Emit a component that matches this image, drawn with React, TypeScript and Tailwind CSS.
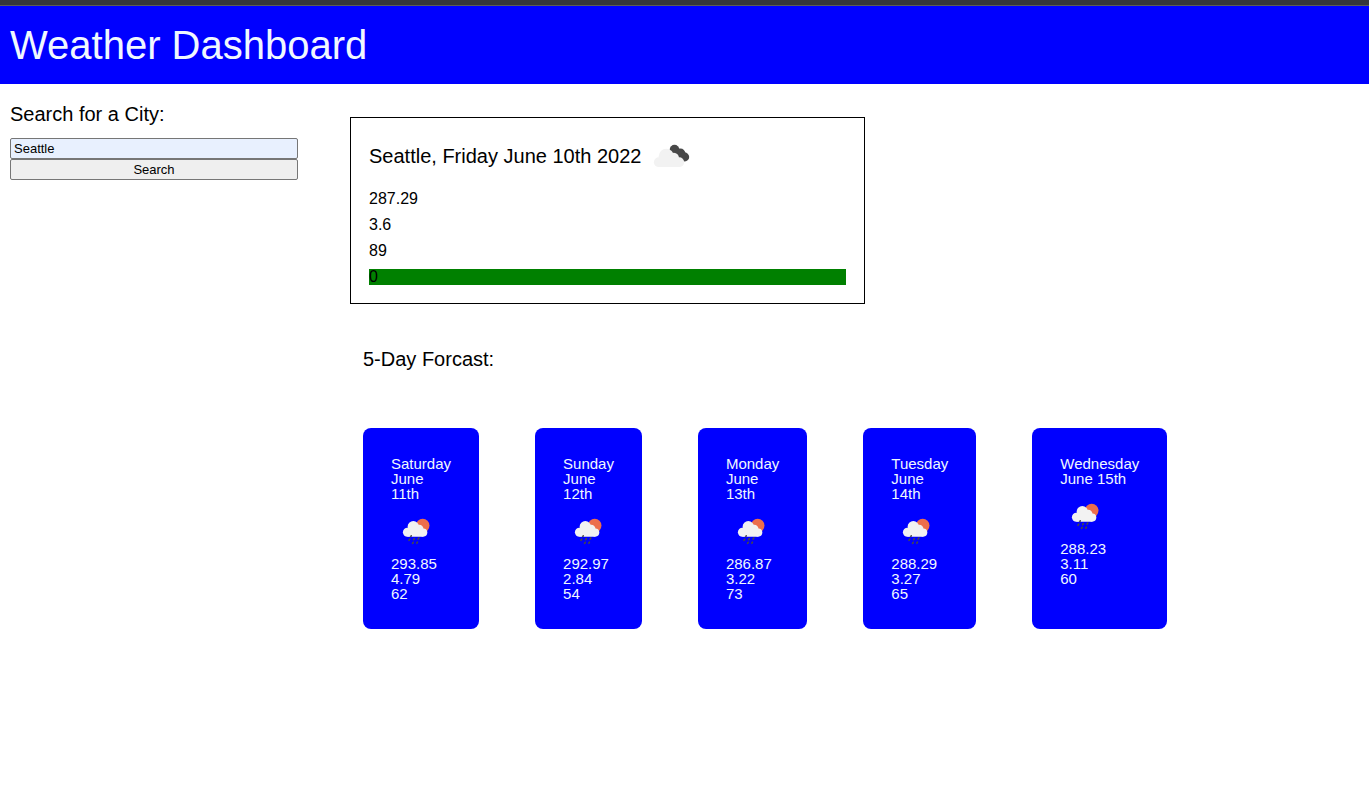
import { useState } from "react";

type Day = {
  weekday: string;
  date: string;
  temp: string;
  wind: string;
  humidity: string;
};

const days: Day[] = [
  { weekday: "Saturday", date: "June 11th", temp: "293.85", wind: "4.79", humidity: "62" },
  { weekday: "Sunday", date: "June 12th", temp: "292.97", wind: "2.84", humidity: "54" },
  { weekday: "Monday", date: "June 13th", temp: "286.87", wind: "3.22", humidity: "73" },
  { weekday: "Tuesday", date: "June 14th", temp: "288.29", wind: "3.27", humidity: "65" },
  { weekday: "Wednesday", date: "June 15th", temp: "288.23", wind: "3.11", humidity: "60" },
];

function BrokenClouds() {
  return (
    <svg viewBox="0 0 50 50" className="size-[50px] shrink-0" role="img" aria-label="Broken clouds">
      <g fill="#484848">
        <circle cx="27.5" cy="18.6" r="4.8" />
        <circle cx="33.4" cy="22.4" r="4.9" />
        <circle cx="37.8" cy="26" r="4.4" />
        <path d="M26 23l5 -6 8 5 -2 8.4 -4 -2z" />
      </g>
      <g fill="#f2f2f2">
        <circle cx="11.8" cy="31.2" r="4.9" />
        <circle cx="19.3" cy="25.3" r="7.6" />
        <circle cx="26.8" cy="27" r="5.2" />
        <circle cx="32.2" cy="31.2" r="4.9" />
        <path d="M11.8 36.1V28l8-4 8 2 4.4 4v6.1z" />
      </g>
    </svg>
  );
}

function SunShower() {
  return (
    <svg viewBox="0 0 50 50" className="size-[50px]" role="img" aria-label="Rain with sun">
      <circle cx="31.7" cy="24.6" r="6.8" fill="#ec6e4c" />
      <g fill="#f2f2f2">
        <circle cx="16.4" cy="31.2" r="4.5" />
        <circle cx="22.3" cy="25.8" r="5.7" />
        <circle cx="28.2" cy="28" r="4.3" />
        <circle cx="32.2" cy="31.6" r="4.1" />
        <path d="M16.4 35.7V28l7-4 6 2 2.8 4v5.7z" />
      </g>
      <g stroke="#484848" strokeWidth="1.6" strokeLinecap="round">
        <path d="M20.2 34.8l-.3.7M18.7 38.2l-.7 1.1M23.3 37.6l-.6 1.1M27.8 37l-.7 1.1M22.2 41.4l-.6 1M26.4 41.2l-.5 1" />
      </g>
    </svg>
  );
}

export default function App() {
  const [city, setCity] = useState("Seattle");

  return (
    <div className="min-h-screen bg-white font-['Liberation_Sans',Arial,sans-serif] text-base leading-4 text-black">
      <div className="h-[6px] border-b border-[#5c5d55] bg-[#35363a]" />
      <header className="bg-[#0000ff] px-[10px] pt-[19px] pb-[19px]">
        <h1 className="text-[40px] leading-10 text-[#f0f8ff]">Weather Dashboard</h1>
      </header>

      <div className="flex items-start">
        <form
          className="flex w-[308px] shrink-0 flex-col px-[10px] pt-5"
          onSubmit={(event) => event.preventDefault()}
        >
          <label htmlFor="city" className="mb-[14px] text-xl leading-5">
            Search for a City:
          </label>
          <input
            id="city"
            type="text"
            value={city}
            onChange={(event) => setCity(event.target.value)}
            className="h-[21px] rounded-[2px] border border-[#767676] bg-[#e8f0fe] px-[3px] text-[13px] leading-4"
          />
          <button
            type="submit"
            className="h-[21px] rounded-[2px] border border-[#767676] bg-[#efefef] text-[13px] leading-4"
          >
            Search
          </button>
        </form>

        <main className="min-w-0 flex-1 pt-[33px] pl-[42px]">
          <section className="max-w-[515px] border border-black px-[18px] pt-[13px] pb-[18px]">
            <div className="mb-[10px] flex items-center gap-[6px]">
              <h2 className="text-xl leading-5">Seattle, Friday June 10th 2022</h2>
              <BrokenClouds />
            </div>
            <div className="flex flex-col gap-[10px]">
              <p>287.29</p>
              <p>3.6</p>
              <p>89</p>
              <p className="bg-[#008000]">0</p>
            </div>
          </section>

          <section className="pt-[45px] pl-[13px]">
            <h2 className="text-xl leading-5">5-Day Forcast:</h2>
            <div className="mt-[59px] flex gap-14">
              {days.map((day) => (
                <article
                  key={day.weekday}
                  className="box-content w-min rounded-lg bg-[#0000ff] p-7 text-[15px] leading-[15px] text-[#f0f8ff]"
                >
                  <h3>
                    {day.weekday} {day.date}
                  </h3>
                  <div className="mb-[5px]">
                    <SunShower />
                  </div>
                  <p>{day.temp}</p>
                  <p>{day.wind}</p>
                  <p>{day.humidity}</p>
                </article>
              ))}
            </div>
          </section>
        </main>
      </div>
    </div>
  );
}
